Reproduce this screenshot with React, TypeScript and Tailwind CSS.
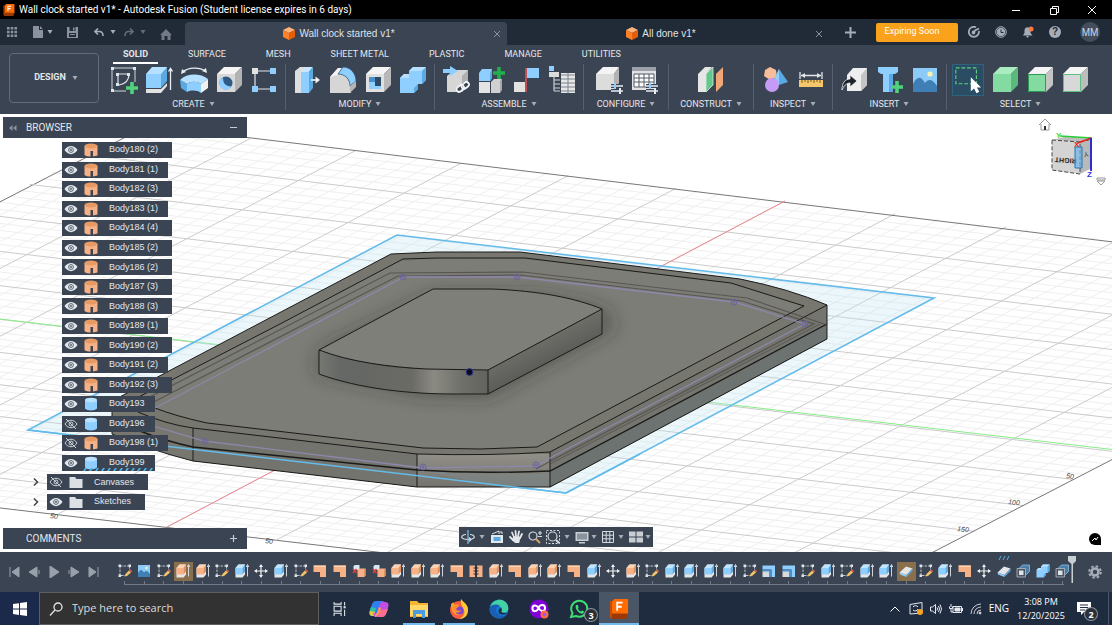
import React from "react";

type IconProps = { className?: string };
type IconType = React.FC<IconProps>;

const BLUE = "#8fcfff";
const BLUE_DARK = "#5aa9e2";
const ORANGE = "#f6b286";
const ORANGE_DARK = "#e0935f";

/* ---------- shared shapes ---------- */

const Box: React.FC<{ top: string; front: string; side: string }> = ({ top, front, side }) => (
    <g>
        <path d="M2 8 L9 1 H27 L20 8Z" fill={top} />
        <path d="M2 8 H20 V26 H2Z" fill={front} />
        <path d="M20 8 L27 1 V19 L20 26Z" fill={side} />
    </g>
);

const Plus: React.FC<{ x: number; y: number; color?: string }> = ({ x, y, color = "#52d17c" }) => (
    <path d={`M${x - 6} ${y} H${x + 6} M${x} ${y - 6} V${y + 6}`} stroke={color} strokeWidth="3.6" />
);

const Sliders = () => (
    <g stroke="#e8edf2" strokeWidth="1.5">
        <path d="M16 20 H28 M16 25 H28" stroke="#3b4453" strokeWidth="4" />
        <path d="M16 20 H28 M16 25 H28" />
        <path d="M20 17 V23" stroke={BLUE} strokeWidth="2" />
        <path d="M25 22 V28" strokeWidth="2" />
    </g>
);

const svg = (children: React.ReactNode): IconType =>
    ({ className = "size-7" }) => (
        <svg viewBox="0 0 28 28" className={`${className} shrink-0`} fill="none" aria-hidden="true">
            {children}
        </svg>
    );

/* ---------- ribbon icons ---------- */

const SketchIcon = svg(
    <>
        <path d="M2 2 H25 V16 M2 2 V25 H16" stroke="#cfd5dc" strokeWidth="1" />
        <g fill="#dfe4ea">
            <path d="M1 1h3v3H1zM23 1h3v3h-3zM1 23h3v3H1z" />
            <path d="M6 7h3v3H6zM17 7h3v3h-3zM6 17h3v3H6z" />
        </g>
        <path d="M8 8 V19 H9 C15 18 19 14 19 8Z" stroke="#dfe4ea" strokeWidth="1.2" />
        <Plus x={22} y={22} />
    </>
);

const ExtrudeIcon = svg(
    <>
        <path d="M2 9 L9 1 H22 L16 9Z" fill="#b5e0ff" />
        <path d="M1 8 H16 V22 H1Z" fill={BLUE} />
        <path d="M16 8 L22 1 V15 L16 22Z" fill={BLUE_DARK} />
        <path d="M1 8 L7 1 H22 L16 8Z" fill="#b5e0ff" />
        <path d="M1 23 H16 L22 17 V20 L16 27 H1Z" fill="#e2e2e2" />
        <path d="M25.500 24 V3 M23.500 5.500 L25.500 2.500 L27.500 5.500" stroke="#e8edf2" strokeWidth="1.3" />
    </>
);

const RevolveIcon = svg(
    <>
        <path d="M3 6 C8 1 20 1 25 5" stroke="#e8edf2" strokeWidth="1.3" />
        <path d="M1 8 L2 3 L6 6Z M27 7 L26 2 L22 5Z" fill="#e8edf2" />
        <path d="M0 14 C7 7 20 7 28 13 L21 18 C17 15 11 15 7 18Z" fill="#b5e0ff" />
        <path d="M0 14 L7 18 V26 L1 22Z" fill="#5aa9e2" />
        <path d="M7 18 C11 15 17 15 21 18 V27 C17 24 11 24 7 26Z" fill={BLUE} />
        <path d="M21 18 L28 13 V22 L21 27Z" fill="#f0f0f0" />
    </>
);

const HoleIcon = svg(
    <>
        <Box top="#f4f4f4" front="#d8d8d8" side="#b3b3b3" />
        <circle cx="11" cy="17" r="6.5" fill="#2f5a86" />
        <path d="M8 11.500 A6.500 6.500 0 1 0 16.500 20.500 C10 20 8 17 8 11.500Z" fill={BLUE} />
    </>
);

const PatternIcon = svg(
    <>
        <path d="M8 5 H20 M5 8 V20 M8 23 H20" stroke="#dfe4ea" strokeWidth="1.2" />
        <path d="M2 2h6v6H2z" fill="#e2e2e2" />
        <path d="M20 2h6v6h-6zM2 20h6v6H2zM20 20h6v6h-6z" fill={BLUE} />
    </>
);

const PressPullIcon = svg(
    <>
        <path d="M1 5 L6 1 H12 V23 L8 27 H1Z" fill="#dedede" />
        <path d="M7 6 L12 1 H19 L15 6Z" fill="#c6e7ff" />
        <path d="M7 6 H15 V27 H7Z" fill={BLUE} />
        <path d="M15 6 L19 1 V22 L15 27Z" fill={BLUE_DARK} />
        <path d="M17 14 H24" stroke="#f2f4f6" strokeWidth="1.6" />
        <path d="M21.500 10.500 L26 14 L21.500 17.500Z" fill="#f2f4f6" />
    </>
);

const FilletIcon = svg(
    <>
        <path d="M1 27 V11 L9 2 H14 L22 12 V27Z" fill="#d6d6d6" />
        <path d="M1 11 L9 2 H16 L8 9Z" fill="#f3f3f3" />
        <path d="M9 8 L14 1 C22 1 27 8 27 15 L21 20 C21 13 16 8 9 8Z" fill={BLUE} stroke="#33557a" strokeWidth="0.8" />
        <path d="M21 20 L27 15 V21 L21 27Z" fill="#b5b5b5" />
    </>
);

const ShellIcon = svg(
    <>
        <Box top="#f4f4f4" front="#e0e0e0" side="#b8b8b8" />
        <path d="M5 11 H17 V23 H5Z" fill="#2f4a66" />
        <path d="M5 23 V16 H11 V20 H17 V23Z" fill={BLUE} />
        <path d="M5 11 H11 V16 H5Z" fill="#4b90c8" />
    </>
);

const CombineIcon = svg(
    <>
        <path d="M1 12 L5 8 H10 V5 L14 1 H27 V14 L23 18 H19 V23 L15 27 H1Z" fill={BLUE} />
        <path d="M1 12 L5 8 H10 V5 L14 1 H27 L23 5 H10 V12Z" fill="#b5e0ff" />
        <path d="M23 5 L27 1 V14 L23 18Z M15 22 L19 18 V23 L15 27Z" fill={BLUE_DARK} />
    </>
);

const InsertCompIcon = svg(
    <>
        <path d="M4 10 L11 4 H25 V19 L19 26 H4Z" fill="#d6d6d6" />
        <path d="M19 10 L25 4 V19 L19 26Z" fill="#b0b0b0" />
        <path d="M0 5 H8" stroke={BLUE} strokeWidth="4" />
        <path d="M7 0 L15 5 L7 10Z" fill={BLUE} />
        <g stroke="#3b4453" strokeWidth="5"><path d="M14 25 L24 17" /></g>
        <g stroke="#f2f4f6" strokeWidth="1.8">
            <rect x="13" y="20" width="8" height="5" rx="2.500" transform="rotate(-38 17 22)" />
            <rect x="18" y="17" width="8" height="5" rx="2.500" transform="rotate(-38 22 19)" />
        </g>
    </>
);

const NewCompIcon = svg(
    <>
        <path d="M1 7 L4 3 H14 V12 L12 15 H1Z" fill={BLUE} />
        <path d="M12 7 L14 3 V12 L12 15Z" fill={BLUE_DARK} />
        <path d="M1 16 H12 V27 H1Z" fill="#e4e4e4" />
        <path d="M13 16 L16 13 H24 L22 16 V27 H13Z" fill="#d0d0d0" />
        <path d="M22 16 L24 13 V24 L22 27Z" fill="#a8a8a8" />
        <Plus x={21} y={7} color="#23b04c" />
    </>
);

const JointIcon = svg(
    <>
        <path d="M14 2 H26 V12 H14Z" fill={BLUE} />
        <path d="M1 16 H12 V26 H1Z" fill="#e2e2e2" />
        <path d="M13 2 V26" stroke="#e05252" strokeWidth="1.6" />
    </>
);

const BomIcon = svg(
    <>
        <path d="M1 0h5v5H1z" fill={BLUE} />
        <path d="M1 6h5v5H1zM6 6h5v5H6z" fill="#dcdcdc" />
        <path d="M6 11 V25 M6 14 H12 M6 18 H12 M6 22 H12 M6 25 H12" stroke="#c9cfd6" strokeWidth="1.2" />
        <path d="M13 7h14v20H13z" fill="#e6e6e6" />
        <path d="M13 9H27M13 13H27M13 17H27M13 21H27M13 25H27M20 7V27" stroke="#7b8490" strokeWidth="1" />
    </>
);

const ConfigBoxIcon = svg(
    <>
        <path d="M1 8 L8 1 H24 L19 8Z" fill="#f4f4f4" />
        <path d="M1 8 H19 V24 H1Z" fill="#dcdcdc" />
        <path d="M19 8 L24 1 V17 L19 24Z" fill="#b3b3b3" />
        <Sliders />
    </>
);

const ConfigTableIcon = svg(
    <>
        <path d="M2 1h24v23H2z" fill="#e2e2e2" />
        <path d="M2 1h24v4H2z" fill="#9aa1aa" />
        <path d="M4 8h20v13H4z" fill="#fff" stroke="#515a66" strokeWidth="1" />
        <path d="M4 12H24M4 16H24M9 8V21M14 8V21M19 8V21" stroke="#515a66" strokeWidth="1" />
        <Sliders />
    </>
);

const PlaneIcon = svg(
    <>
        <path d="M1 8 L8 1 H15 L9 8 V26 H1Z" fill="#e6e6e6" />
        <path d="M9 8 L16 1 V19 L9 26Z" fill="#62c98a" stroke="#e6e6e6" strokeWidth="0.8" />
        <path d="M19 8 L26 1 V19 L19 26Z" fill="#f0a778" />
    </>
);

const InspectIcon = svg(
    <>
        <path d="M8 1 L14 4 L15 11 L8 14 L2 10 L3 4Z" fill="#f6bd9a" />
        <path d="M17 3 L26 16 L17 19 L12 14Z" fill={BLUE_DARK} />
        <path d="M17 3 L17 19 L12 14Z" fill={BLUE} />
        <circle cx="10" cy="19" r="7" fill="#c59bf5" />
    </>
);

const MeasureIcon = svg(
    <>
        <path d="M3 6 V13 M25 6 V13 M4 9.500 H24" stroke="#e2e6ea" strokeWidth="1.3" />
        <path d="M4 9.500 L8 7 V12Z M24 9.500 L20 7 V12Z" fill="#e2e6ea" />
        <path d="M2 14h24v7H2z" fill="#f5c66b" />
        <path d="M5 14V17M8 14V16M11 14V17M14 14V16M17 14V17M20 14V16M23 14V17" stroke="#7a5b1d" strokeWidth="1" />
    </>
);

const DeriveIcon = svg(
    <>
        <path d="M6 9 L12 2 H26 V19 L20 25 H6Z" fill="#eeeeee" />
        <path d="M20 9 L26 2 V19 L20 25Z" fill="#c4c4c4" />
        <path d="M1 24 C1 17 4 13 9 13 V9 L16 15 L9 21 V17 C5 17 3 20 1 24Z" fill="#1f242c" stroke="#f2f2f2" strokeWidth="0.8" />
    </>
);

const FastenerIcon = svg(
    <>
        <path d="M2 1 H22 V6 L19 8 H5 L2 6Z" fill={BLUE} />
        <path d="M7 8 H17 V26 H7Z" fill={BLUE_DARK} />
        <path d="M7 8 H13 V26 H7Z" fill={BLUE} />
        <Plus x={21} y={21} />
    </>
);

const CanvasIcon = svg(
    <>
        <path d="M2 2h24v24H2z" fill="#8ccaf7" />
        <path d="M2 18 C6 10 10 10 14 17 C17 13 21 12 26 20 V26 H2Z" fill="#3f7fb6" />
        <circle cx="19" cy="8" r="2.6" fill="#fbf3b0" />
    </>
);

const GreenBoxIcon = svg(<Box top="#a9ecc0" front="#84dba1" side="#5cb87c" />);
const GreenFaceIcon = svg(
    <>
        <Box top="#f4f4f4" front="#84dba1" side="#c4c4c4" />
        <path d="M2.500 8.500 H19.500 V25.500 H2.500Z" stroke="#2c9a53" strokeWidth="1" />
    </>
);
const GreyFaceIcon = svg(
    <>
        <Box top="#f4f4f4" front="#d8d8d8" side="#bcbcbc" />
        <path d="M2.500 8.500 H19.500 V25.500 H2.500Z" stroke="#5fbf80" strokeWidth="1" />
    </>
);

const SelectIcon: IconType = () => (
    <span className="flex h-8 w-8 shrink-0 items-center justify-center border border-[#2f627d] bg-[#2b4d64]">
        <svg viewBox="0 0 32 32" className="size-8" fill="none" aria-hidden="true">
            <path d="M3 3 H25 V20 H3Z" stroke="#5ed07f" strokeWidth="1.2" strokeDasharray="4 2" />
            <path d="M19 13 V28 L22.500 25 L25 30 L28 28.500 L25.500 24 H30Z" fill="#fff" />
        </svg>
    </span>
);

/* ---------- timeline icons ---------- */

const TlSketch = svg(
    <>
        <path d="M4 4 H23 M4 4 V23 H14 M23 4 V12" stroke="#dfe4ea" strokeWidth="1.6" strokeDasharray="5 2" />
        <path d="M1 1h5v5H1zM21 1h5v5h-5zM1 21h5v5H1z" fill="#dfe4ea" />
        <path d="M13 25 L15 20 L22 13 L26 17 L18 24Z" fill="#f2c36a" />
        <path d="M22 13 L26 17 L28 14 L25 11Z" fill="#e8604c" />
    </>
);

const tlExtrude = (top: string, face: string, side: string) =>
    svg(
        <>
            <path d="M1 8 L7 1 H20 V21 L15 27 H1Z" fill="#e6e6e6" />
            <path d="M1 8 L7 1 H20 L15 8Z" fill={top} />
            <path d="M1 8 H15 V21 H1Z" fill={face} />
            <path d="M15 8 L20 1 V15 L15 21Z" fill={side} />
            <path d="M25 25 V3 M22.500 6 L25 1 L27.500 6" stroke="#dfe4ea" strokeWidth="1.8" />
        </>
    );
const TlExtrudeO = tlExtrude("#ffd2b0", ORANGE, ORANGE_DARK);
const TlExtrudeB = tlExtrude("#bfe5ff", BLUE, BLUE_DARK);

const TlMove = svg(
    <>
        <path d="M14 4 V24 M4 14 H24" stroke="#f2f4f6" strokeWidth="2.4" />
        <path d="M14 0 L18 6 H10Z M14 28 L18 22 H10Z M0 14 L6 10 V18Z M28 14 L22 10 V18Z" fill="#f2f4f6" />
    </>
);

const TlNotch = svg(
    <>
        <path d="M1 3 H26 V26 H14 V16 H1Z" fill={ORANGE} />
        <path d="M1 3 H26 L24 6 H3Z" fill="#ffd2b0" />
    </>
);

const TlFillet = svg(
    <>
        <path d="M1 3 H26 V26 H19 V11 H1Z" fill={BLUE} />
        <path d="M1 14 H15 V26 H1Z" fill="#d6dade" />
        <path d="M1 11 H19 V26 H15 V15 H1Z" fill="#4b90c8" />
    </>
);

const TlJoin = svg(
    <>
        <path d="M3 4 L6 2 H15 V12 H3Z" fill="#d6e8f6" />
        <path d="M11 12 L14 9 H27 V23 L24 26 H11Z" fill={ORANGE} />
        <path d="M24 12 L27 9 V23 L24 26Z" fill={ORANGE_DARK} />
        <path d="M2 10 L9 18 M9 10 L2 18" stroke="#dc3d3d" strokeWidth="3" />
    </>
);

const TlSplit = svg(
    <>
        <path d="M1 3 H12 V26 H1Z M16 3 H27 V26 H16Z" fill={ORANGE} />
        <path d="M14 1 V28" stroke="#222a36" strokeWidth="2" />
        <path d="M9 8 H19 M9 14 H19 M9 20 H19" stroke="#222a36" strokeWidth="2" />
    </>
);

const TlEraser = svg(
    <>
        <path d="M1 17 L14 5 L27 9 L15 22Z" fill="#e6e6e6" />
        <path d="M1 17 L15 22 V26 L2 21Z" fill={BLUE} />
        <path d="M15 22 L27 9 V14 L15 26Z" fill={BLUE_DARK} />
    </>
);

const TlShell = svg(
    <>
        <path d="M7 8 L13 2 H27 V15 L21 21 H7Z" fill="#4d7ea8" stroke={BLUE} strokeWidth="1.4" />
        <path d="M2 9 H19 V26 H2Z" fill="#4a5462" stroke="#c4cad1" strokeWidth="1.4" />
        <path d="M6 13 H15 V22 H6Z" fill="#dfe3e7" />
    </>
);

/* ---------- browser tree icons ---------- */

const Eye: React.FC<{ off?: boolean }> = ({ off }) => (
    <svg viewBox="0 0 14 12" className="h-3 w-3.5 shrink-0" fill="none" aria-hidden="true">
        {off ? (
            <g stroke="#cdd3da" strokeWidth="1">
                <path d="M1 6 C4 1 10 1 13 6 C10 11 4 11 1 6Z" />
                <circle cx="7" cy="6" r="2" />
                <path d="M2 1 L12 11" />
            </g>
        ) : (
            <g>
                <path d="M0.500 6 C4 0.500 10 0.500 13.500 6 C10 11.500 4 11.500 0.500 6Z" fill="#e3e8ed" />
                <circle cx="7" cy="6" r="2.400" fill="#e3e8ed" stroke="#4a5462" strokeWidth="0.900" />
                <circle cx="7" cy="6" r="0.900" fill="#4a5462" />
            </g>
        )}
    </svg>
);

const BodyIcon: React.FC<{ kind: string }> = ({ kind }) => (
    <svg viewBox="0 0 14 14" className="size-3.5 shrink-0" aria-hidden="true">
        {kind === "surface" && (
            <g>
                <path d="M0.500 3 V12 C2 13.500 4 13.500 6.500 13.500 V8 H9 V13.500 L13.500 12.500 V3Z" fill={ORANGE} />
                <ellipse cx="7" cy="3" rx="6.500" ry="2.500" fill="#e79a63" />
            </g>
        )}
        {kind === "solid" && (
            <g>
                <path d="M1 3 V11.500 C3 14 11 14 13 11.500 V3Z" fill={BLUE} />
                <ellipse cx="7" cy="3" rx="6" ry="2.300" fill="#b9e2ff" />
            </g>
        )}
        {kind === "folder" && <path d="M0.500 2 H6 L7.500 4 H13.500 V13 H0.500Z" fill="#dcdfe3" />}
    </svg>
);

const Caret: React.FC<IconProps> = ({ className = "text-[#a5adb8]" }) => (
    <svg viewBox="0 0 6 4" className={`h-1 w-1.5 shrink-0 ${className}`} fill="currentColor" aria-hidden="true">
        <path d="M0.500 0 H5.500 L3 4Z" />
    </svg>
);

const FusionLogo: React.FC<IconProps> = ({ className = "size-3" }) => (
    <svg viewBox="0 0 20 22" className={`${className} shrink-0`} aria-hidden="true">
        <path d="M2 3 L5 0 H20 V17 L17 19 H2Z" fill="#ff6b00" />
        <path d="M2 16 H20 L18 22 H2Z" fill="#9c3a07" />
        <path d="M2 3 V22 L0 20 V2Z" fill="#c94f04" />
        <path d="M8 13 V4 H14 M8 8.500 H13" stroke="#fff" strokeWidth="2" fill="none" />
    </svg>
);

const OrangeCube = () => (
    <svg viewBox="0 0 12 13" className="h-[13px] w-3 shrink-0" aria-hidden="true">
        <path d="M6 0 L12 3 L6 6 L0 3Z" fill="#ffb27a" />
        <path d="M0 3 L6 6 V13 L0 10Z" fill="#ff8126" />
        <path d="M12 3 L6 6 V13 L12 10Z" fill="#e55f0a" />
    </svg>
);

/* ---------- data ---------- */

const ribbonTabs = ["SOLID", "SURFACE", "MESH", "SHEET METAL", "PLASTIC", "MANAGE", "UTILITIES"];

const ribbonGroups: { label: string; width: string; icons: IconType[] }[] = [
    { label: "CREATE", width: "w-[183px]", icons: [SketchIcon, ExtrudeIcon, RevolveIcon, HoleIcon, PatternIcon] },
    { label: "MODIFY", width: "w-[149px]", icons: [PressPullIcon, FilletIcon, ShellIcon, CombineIcon] },
    { label: "ASSEMBLE", width: "w-[149px]", icons: [InsertCompIcon, NewCompIcon, JointIcon, BomIcon] },
    { label: "CONFIGURE", width: "w-[85px]", icons: [ConfigBoxIcon, ConfigTableIcon] },
    { label: "CONSTRUCT", width: "w-[85px]", icons: [PlaneIcon] },
    { label: "INSPECT", width: "w-[79px]", icons: [InspectIcon, MeasureIcon] },
    { label: "INSERT", width: "w-[114px]", icons: [DeriveIcon, FastenerIcon, CanvasIcon] },
    { label: "SELECT", width: "w-[148px]", icons: [SelectIcon, GreenBoxIcon, GreenFaceIcon, GreyFaceIcon] },
];

const bodies = [
    { label: "Body180 (2)", kind: "surface" },
    { label: "Body181 (1)", kind: "surface", tight: true },
    { label: "Body182 (3)", kind: "surface" },
    { label: "Body183 (1)", kind: "surface", tight: true },
    { label: "Body184 (4)", kind: "surface" },
    { label: "Body185 (2)", kind: "surface" },
    { label: "Body186 (2)", kind: "surface" },
    { label: "Body187 (3)", kind: "surface" },
    { label: "Body188 (3)", kind: "surface" },
    { label: "Body189 (1)", kind: "surface", tight: true },
    { label: "Body190 (2)", kind: "surface" },
    { label: "Body191 (2)", kind: "surface", tight: true },
    { label: "Body192 (3)", kind: "surface" },
    { label: "Body193", kind: "solid", tight: true },
    { label: "Body196", kind: "solid", tight: true, hidden: true },
    { label: "Body198 (1)", kind: "surface", tight: true, hidden: true },
    { label: "Body199", kind: "solid", tight: true, pending: true },
    { label: "Canvases", kind: "folder", hidden: true },
    { label: "Sketches", kind: "folder" },
];

const timelineIcons: Record<string, IconType> = {
    s: TlSketch,
    i: CanvasIcon,
    o: TlExtrudeO,
    b: TlExtrudeB,
    m: TlMove,
    n: TlNotch,
    f: TlFillet,
    j: TlJoin,
    p: TlSplit,
    e: TlEraser,
    h: TlShell,
    c: CombineIcon,
};
const timeline = "sisoosbmbsnnjjooonponoonbmosbbbbsffsbsbbesbnmehch".split("");
const timelineActive = [3, 40];

/* ---------- canvas drawing ---------- */

const GRID_STEPS = 30;
const gridLines = Array.from({ length: GRID_STEPS * 2 + 1 }, (_, n) => {
    const k = n - GRID_STEPS;
    const j = k / 5;
    const major = k % 5 === 0;
    const edge = Math.abs(k) === GRID_STEPS;
    const drift = 51.5 * j + 0.47 * j * j;
    const leftX = -184 + drift;
    const rightX = 1125 + drift;
    const topX = 785 + 109.5 * j + 0.5 * j * j;
    const bottomX = 167 + 109 * j + 0.2 * j * j;
    return {
        k,
        color: edge ? "#777" : major ? "#cbcbcb" : "#efefef",
        along: [leftX, 200 - 0.53 * leftX, rightX, 551 - 0.522 * (rightX - 937)],
        across: [topX, 201 + 0.1165 * (topX - 785), bottomX, 527 + 0.12 * (bottomX - 167)],
    };
}).sort((a, b) => Number(a.k % 5 === 0) - Number(b.k % 5 === 0));

const Scene = () => (
    <svg
        viewBox="0 114 1112 438"
        preserveAspectRatio="xMidYMid slice"
        className="absolute inset-0 h-full w-full"
        fill="none"
        aria-hidden="true"
    >
        <defs>
            <linearGradient id="bossFront" x1="319" y1="0" x2="488" y2="0" gradientUnits="userSpaceOnUse">
                <stop offset="0" stopColor="#777872" />
                <stop offset="0.12" stopColor="#656866" />
                <stop offset="0.3" stopColor="#666763" />
                <stop offset="0.55" stopColor="#6b6b66" />
                <stop offset="0.68" stopColor="#8b8982" />
                <stop offset="0.85" stopColor="#6f6f6a" />
                <stop offset="1" stopColor="#62625e" />
            </linearGradient>
            <linearGradient id="bossSide" x1="520" y1="345" x2="534" y2="373" gradientUnits="userSpaceOnUse">
                <stop offset="0" stopColor="#71716c" />
                <stop offset="1" stopColor="#5a5a56" />
            </linearGradient>
            <linearGradient id="frontFace" x1="0" y1="454" x2="0" y2="487" gradientUnits="userSpaceOnUse">
                <stop offset="0" stopColor="#918f88" />
                <stop offset="1" stopColor="#74736d" />
            </linearGradient>
            <filter id="soft" x="-30%" y="-30%" width="160%" height="160%">
                <feGaussianBlur stdDeviation="10" />
            </filter>
        </defs>

        {gridLines.map(({ k, color, along, across }) => (
            <g key={k} stroke={color} strokeWidth="1">
                <path d={`M${along[0]} ${along[1]} L${along[2]} ${along[3]}`} />
                <path d={`M${across[0]} ${across[1]} L${across[2]} ${across[3]}`} />
            </g>
        ))}
        <path d="M785 201 L167 527" stroke="#f08a94" />
        <path d="M0 319 L1125 451" stroke="#86ee86" />

        <g fill="#444" fontFamily="Liberation Sans" fontStyle="italic" fontSize="7">
            <text x="1066" y="478" transform="rotate(6 1066 478)">50</text>
            <text x="1008" y="504" transform="rotate(6 1008 504)">100</text>
            <text x="957" y="531" transform="rotate(6 957 531)">150</text>
            <text x="50" y="518" transform="rotate(6 50 518)">50</text>
            <text x="265" y="543" transform="rotate(6 265 543)">50</text>
        </g>

        {/* sketch plane */}
        <path d="M397 235 L934 298 L566 493 L28 430Z" fill="#bfe3f5" fillOpacity="0.3" stroke="#64bbea" strokeWidth="1.6" />

        {/* base plate */}
        <path
            d="M391 254 L437 252 H520 L740 279 Q790 289 827 305 V339 L550 487 H417 L193 461 Q150 450 112 434 V401Z"
            fill="#777770"
        />
        <path d="M398 261 L437 259 H523 L731 283 L804 306 L537 447 L480 449 L423 448 L207 423 L155 408 L125 404Z" fill="#7d7d77" />
        <path d="M550 452 L827 305 V339 L550 487Z" fill="#75756f" />
        <path d="M550 472 L827 325 V339 L550 487Z" fill="#6c7371" />
        <path d="M193 428 L417 454 V487 L193 461Z" fill="#74746e" />
        <path d="M417 454 H550 V487 H417Z" fill="url(#frontFace)" />
        <path d="M417 470 L483 474 H550 V487 L500 487Z" fill="#7e888a" fillOpacity="0.6" />

        {/* contact shadow */}
        <path
            d="M322 350 L433 296 L540 296 L602 309 L616 326 L488 396 L420 394 L314 372Z"
            fill="#2e2e2b"
            fillOpacity="0.5"
            filter="url(#soft)"
        />

        {/* plate edges */}
        <g stroke="#1a1a18" strokeWidth="1">
            <path d="M112 401 L391 254 L437 252 H520 L740 279 Q790 289 827 305 V339 L550 487 H417 L193 461 Q150 450 112 434Z" />
            <path d="M125 404 L280 324 L403 259 L437 258 L525 258 L731 283 L804 306 L537 447 L480 449 L423 448 L207 423 Q175 416 155 408 L138 400" />
            <path d="M138 412 Q165 424 193 428 L417 454 Q490 456 550 452 L827 305" />
            <path d="M193 428 V461 M417 454 V487 M550 452 V487" />
            <path d="M140 431 Q165 441 193 447 L417 470 Q480 474 550 471 L827 324" strokeWidth="1.400" />
        </g>
        <g stroke="#4a4641" strokeOpacity="0.7" strokeWidth="1.200">
            <path d="M140 402 L390 273 L523 272 L747 298 L827 325" />
            <path d="M146 406 L398 276 L520 275 L742 301 L814 324 L560 456 L536 469" />
            <path d="M550 464 L820 324" strokeOpacity="0.5" />
        </g>
        <path
            d="M155 408 L404 277 L517 277 L734 302 L805 324 L550 458 L536 466 L423 468 L204 441 L150 425"
            stroke="#8d87ab"
            strokeWidth="1.3"
        />
        <g stroke="#6c63a0" strokeWidth="1">
            {[[403, 277], [517, 277], [734, 302], [805, 324], [536, 465], [423, 467], [205, 441]].map(([x, y]) => (
                <g key={x}>
                    <circle cx={x} cy={y} r="3" />
                    <circle cx={x} cy={y} r="1" />
                </g>
            ))}
        </g>
        <path d="M28 430 L566 493 L640 454" stroke="#64bbea" strokeWidth="1.6" />

        {/* raised boss */}
        <path d="M319 350 C350 362 390 369 426 369 H488 V394 H455 C410 394 360 389 319 374Z" fill="url(#bossFront)" />
        <path d="M488 370 L602 309 V334 L488 394Z" fill="url(#bossSide)" />
        <path d="M433 289 H492 C540 291 575 298 602 309 L488 370 L426 369 C390 367 350 362 319 350Z" fill="#7e7f79" />
        <g stroke="#1a1a18" strokeWidth="1">
            <path d="M433 289 H492 C540 291 575 298 602 309 L488 370 L426 369 C390 367 350 362 319 350Z" />
            <path d="M319 350 V374 C360 389 410 394 455 394 H488 L602 334 V309 M488 370 V394" />
        </g>
        <circle cx="469.500" cy="372" r="3.500" fill="#0b0b1e" stroke="#3f3f8a" />
    </svg>
);

const ViewCube = () => (
    <svg viewBox="0 0 80 72" className="absolute top-1 right-0 h-[72px] w-20" fill="none" aria-hidden="true">
        <path d="M7 7 L13 1 L19 7 M9 6 V12 H17 V6" stroke="#999" />
        <path d="M12 8h2v4h-2z" fill="#333" />
        <path d="M20 22 L32 19 H60 L48 24Z" fill="#bdbdbd" />
        <path d="M20 22 L48 24 V56 L20 52Z" fill="#d4d4d4" />
        <path d="M48 24 L60 21 V50 L48 56Z" fill="#b9b9b9" />
        <path d="M20 22 L48 24 V56 L20 52Z M48 24 L60 21" stroke="#444" strokeDasharray="4 2" />
        <text x="34" y="36" fontSize="7" fontWeight="700" fontFamily="Liberation Sans" fill="#222" textAnchor="middle" transform="rotate(184 34 38)">
            RIGHT
        </text>
        <text x="54" y="38" fontSize="7" fontFamily="Liberation Sans" fill="#444" textAnchor="middle" transform="rotate(170 54 36)">
            Y
        </text>
        <path d="M43 29 H50 V50 H43Z" fill="#6fb5e8" fillOpacity="0.7" stroke="#1f77b8" />
        <path d="M28 18 L60 20" stroke="#27d034" strokeWidth="1.6" />
        <path d="M59 20 L46 25" stroke="#e52525" strokeWidth="1.8" />
        <path d="M59 20 V53" stroke="#2020c8" strokeWidth="1.8" />
        <g fontFamily="Liberation Sans" fontSize="8" fontWeight="700">
            <text x="24" y="20" fill="#3ddc3d">Y</text>
            <text x="42" y="29" fill="#e52525">X</text>
            <text x="55" y="59" fill="#3434e0">Z</text>
        </g>
        <path d="M65 60 H73 V62 H65Z M65 63 L69 67 L73 63Z" stroke="#999" />
    </svg>
);

/* ---------- page sections ---------- */

const TitleBar = () => (
    <header className="flex h-[19px] shrink-0 items-center bg-black px-[3px] text-white">
        <FusionLogo />
        <h1 className="ml-1 flex-1 font-['Roboto','Noto_Sans',sans-serif] text-[10px] leading-4">
            Wall clock started v1* - Autodesk Fusion (Student license expires in 6 days)
        </h1>
        <div className="mr-3 flex items-center gap-7">
            <button aria-label="Minimize">
                <svg viewBox="0 0 10 10" className="size-2.5" stroke="#fff"><path d="M1 5.500 H9" /></svg>
            </button>
            <button aria-label="Restore">
                <svg viewBox="0 0 10 10" className="size-2.5" stroke="#fff" fill="none">
                    <path d="M1.500 3.500 H7.500 V9.500 H1.500Z M3.500 3 V1.500 H9.500 V7.500 H8" />
                </svg>
            </button>
            <button aria-label="Close">
                <svg viewBox="0 0 10 10" className="size-2.5" stroke="#fff"><path d="M1 1 L9 9 M9 1 L1 9" /></svg>
            </button>
        </div>
    </header>
);

const DocumentBar = () => (
    <div className="flex h-[26px] shrink-0 items-stretch bg-[#212a37] text-[11px] text-[#dfe3e8]">
        <div className="flex w-[185px] shrink-0 items-center pl-[7px] text-[#8b929d]">
            <button aria-label="Data panel" className="mr-4">
                <svg viewBox="0 0 10 10" className="size-2.5" fill="currentColor">
                    <path d="M0 0h2.600v2.600H0zM3.700 0h2.600v2.600H3.700zM7.400 0H10v2.600H7.400zM0 3.700h2.600v2.600H0zM3.700 3.700h2.600v2.600H3.700zM7.400 3.700H10v2.600H7.400zM0 7.400h2.600V10H0zM3.700 7.400h2.600V10H3.700zM7.400 7.400H10V10H7.400z" />
                </svg>
            </button>
            <button aria-label="File" className="mr-3.5 flex items-center gap-1">
                <svg viewBox="0 0 10 12" className="h-3 w-2.5" fill="currentColor"><path d="M0 0 H6 V4 H10 V12 H0Z M7 0 L10 3 H7Z" /></svg>
                <Caret />
            </button>
            <button aria-label="Save" className="mr-4">
                <svg viewBox="0 0 11 11" className="size-[11px]" fill="currentColor" fillRule="evenodd">
                    <path d="M0 0 H11 V11 H0Z M2.500 0 V4 H8.500 V0Z M2 6 V10 H9 V6Z" /><path d="M6 0.500h1.500v3H6zM3 7h5v1H3z" />
                </svg>
            </button>
            <button aria-label="Undo" className="mr-2 flex items-center gap-1.5">
                <svg viewBox="0 0 10 8" className="h-2 w-2.5" fill="none" stroke="#a5adb8" strokeWidth="1.600"><path d="M1 3.500 H6 Q9 4 9 8 M4 0.500 L1 3.500 L4 6.500" /></svg>
                <Caret />
            </button>
            <button aria-label="Redo" className="mr-3.5 flex items-center gap-1.5 opacity-50">
                <svg viewBox="0 0 10 8" className="h-2 w-2.5" fill="none" stroke="#a5adb8" strokeWidth="1.600"><path d="M9 3.500 H4 Q1 4 1 8 M6 0.500 L9 3.500 L6 6.500" /></svg>
                <Caret />
            </button>
            <button aria-label="Home" className="mt-1">
                <svg viewBox="0 0 12 11" className="h-[11px] w-3" fill="#737a85"><path d="M6 0 L12 6 H10.500 V11 H7.500 V7 H4.500 V11 H1.500 V6 H0Z" /></svg>
            </button>
        </div>

        <div className="mt-[3px] flex flex-1 items-center rounded-t-sm bg-[#3b4453]">
            <div className="flex flex-1 items-center justify-center gap-1">
                <OrangeCube />
                <span className="font-['Liberation_Sans',Arial,sans-serif] text-[10px]">Wall clock started v1*</span>
            </div>
            <button aria-label="Close Wall clock started" className="mr-1.5">
                <svg viewBox="0 0 8 8" className="size-2" stroke="#8b929d"><path d="M1 1 L7 7 M7 1 L1 7" /></svg>
            </button>
        </div>
        <div className="mt-[3px] flex flex-1 items-center">
            <div className="flex flex-1 items-center justify-center gap-1">
                <OrangeCube />
                <span className="font-['Liberation_Sans',Arial,sans-serif] text-[10px]">All done v1*</span>
            </div>
            <button aria-label="Close All done" className="mr-1.5">
                <svg viewBox="0 0 8 8" className="size-2" stroke="#8b929d"><path d="M1 1 L7 7 M7 1 L1 7" /></svg>
            </button>
        </div>

        <div className="flex w-[283px] shrink-0 items-center pl-4 text-[#a5adb8]">
            <button aria-label="New design" className="mr-5">
                <svg viewBox="0 0 11 11" className="size-[11px]" stroke="currentColor" strokeWidth="2"><path d="M5.500 0 V11 M0 5.500 H11" /></svg>
            </button>
            <button className="mr-2.5 flex h-[19px] w-[82px] items-center justify-center rounded-xs bg-[#faa21b] pr-2.5 font-['Roboto',sans-serif] text-[9px] text-white">
                Expiring Soon
            </button>
            <div className="flex items-center gap-[15px]">
                <button aria-label="Extensions">
                    <svg viewBox="0 0 12 12" className="size-3" fill="none" stroke="currentColor" strokeWidth="1.800">
                        <path d="M8 1.300 A5 5 0 1 0 10.800 5" /><path d="M5.500 7 L7 4.500 L11 2.500" />
                        <circle cx="5.500" cy="6.500" r="1" />
                    </svg>
                </button>
                <button aria-label="Job status">
                    <svg viewBox="0 0 12 12" className="size-3" fill="none" stroke="currentColor">
                        <circle cx="6" cy="6" r="5.300" /><circle cx="6" cy="6" r="3.800" fill="currentColor" /><path d="M6 3.500 V6.500 H8.500" stroke="#212a37" />
                    </svg>
                </button>
                <button aria-label="Notifications">
                    <svg viewBox="0 0 12 12" className="size-3" fill="currentColor">
                        <path d="M1 9.500 L2.500 7 V4.500 C2.500 0 8.500 0 8.500 4.500 V7 L10.500 9.500Z M4 10 H7 L5.500 12Z" /><circle cx="9" cy="3" r="2.500" fill="#ff7b42" />
                    </svg>
                </button>
                <button aria-label="Help" className="flex size-3 items-center justify-center rounded-full bg-[#a5adb8] font-['Liberation_Sans',sans-serif] text-[10px] leading-none font-bold text-[#212a37]">
                    ?
                </button>
            </div>
            <button aria-label="Account" className="ml-[19px] flex size-5 items-center justify-center rounded-full bg-[#434d5c] font-['Liberation_Sans',sans-serif] text-[10px] text-[#d6dbe1]">
                MM
            </button>
        </div>
    </div>
);

const Ribbon = () => (
    <div className="flex h-[69px] shrink-0 overflow-hidden bg-[#3b4453] font-['Roboto',sans-serif] text-[9px] text-[#e4e8ec]">
        <button className="mt-2 ml-[9px] flex h-[50px] w-[90px] shrink-0 items-center justify-center gap-1.5 rounded-sm border border-[#626c7b] pl-1 font-bold">
            DESIGN <Caret />
        </button>
        <div className="ml-[11px] flex-1">
            <nav className="flex h-[19px] items-stretch gap-5 pl-[3px]">
                {ribbonTabs.map((tab, index) => (
                    <button
                        key={tab}
                        className={`flex items-center border-b-2 px-2.5 pt-0.5 leading-none whitespace-nowrap ${
                            index === 0 ? "border-white font-bold" : "border-transparent"
                        }`}
                    >
                        {tab}
                    </button>
                ))}
            </nav>
            <div className="flex h-[46px]">
                {ribbonGroups.map((group, index) => (
                    <div
                        key={group.label}
                        className={`flex shrink-0 flex-col items-center ${group.width} ${
                            index === 0 ? "-ml-2" : "border-l border-[#566070]"
                        }`}
                    >
                        <div className="flex h-8 shrink-0 items-center justify-center gap-[7px]">
                            {group.icons.map((Icon, i) => (
                                <Icon key={i} />
                            ))}
                        </div>
                        <button className="flex items-center gap-1 leading-4 whitespace-nowrap">
                            {group.label} <Caret />
                        </button>
                    </div>
                ))}
            </div>
        </div>
    </div>
);

const BrowserPanel = () => (
    <section className="absolute inset-y-0 left-[3px] flex w-[244px] flex-col pt-[3px] pb-[3px] text-[#e4e8ec]">
        <div className="flex h-[21px] shrink-0 items-center bg-[#3b4453] px-1.5 font-['Roboto','Noto_Sans',sans-serif] text-[10px]">
            <svg viewBox="0 0 8 6" className="mr-[9px] h-1.5 w-2" fill="#8b929d"><path d="M3.500 0 V6 L0 3Z M7.500 0 V6 L4 3Z" /></svg>
            <h2 className="flex-1">BROWSER</h2>
            <button aria-label="Collapse browser" className="mr-1 h-px w-[7px] bg-[#c7cdd4]"></button>
        </div>
        <ul className="flex flex-1 flex-col items-start justify-between pt-1 pb-[18px] font-['Liberation_Sans',Arial,sans-serif] text-[9px]">
            {bodies.map((item) => {
                const folder = item.kind === "folder";
                return (
                    <li key={item.label} className={`flex items-center ${folder ? "pl-[30px]" : "pl-[59px]"}`}>
                        {folder && (
                            <svg viewBox="0 0 6 8" className="mr-2 h-2 w-1.5" fill="none" stroke="#444" strokeWidth="1.500">
                                <path d="M1 0.500 L4.500 4 L1 7.500" />
                            </svg>
                        )}
                        <div
                            className={`relative flex h-4 items-center bg-[#3b4453] pl-0.5 whitespace-nowrap ${
                                item.tight ? "pr-2.5" : "pr-3.5"
                            }`}
                        >
                            <Eye off={item.hidden} />
                            <span className="ml-1.5 flex"><BodyIcon kind={item.kind} /></span>
                            <span className="ml-[11px]">{item.label}</span>
                            {item.pending && (
                                <svg viewBox="0 0 72 4" className="absolute right-0 bottom-0 h-1 w-[72px]" fill="#4db4e8" aria-hidden="true">
                                    {Array.from({ length: 12 }, (_, i) => (
                                        <path key={i} d={`M${i * 6} 4 L${i * 6 + 2} 1 H${i * 6 + 4} L${i * 6 + 2} 4Z`} />
                                    ))}
                                </svg>
                            )}
                        </div>
                    </li>
                );
            })}
        </ul>
        <div className="flex h-[21px] shrink-0 items-center bg-[#3b4453] pr-2.5 pl-[23px] font-['Roboto','Noto_Sans',sans-serif] text-[10px]">
            <h2 className="flex-1">COMMENTS</h2>
            <button aria-label="Add comment">
                <svg viewBox="0 0 7 7" className="size-[7px]" stroke="#c7cdd4" strokeWidth="1.200"><path d="M3.500 0 V7 M0 3.500 H7" /></svg>
            </button>
        </div>
    </section>
);

const NavBar = () => (
    <div className="absolute bottom-[5px] left-1/2 flex h-5 w-[194px] -translate-x-1/2 items-center justify-between bg-[#3b4453] px-0.5 text-[#d6dbe1]">
        <button aria-label="Orbit" className="flex items-center gap-1">
            <svg viewBox="0 0 14 14" className="size-3.5" fill="none" stroke="currentColor" strokeWidth="1.200">
                <path d="M5 4.500 C-1 5 -1 9.500 7 9.500 C15 9.500 15 5 9 4.500" /><path d="M7 0 V14" stroke="#7cc4f5" /><path d="M8 7.500 L10 9.500 L8 11.500" />
            </svg>
            <Caret />
        </button>
        <button aria-label="Look at">
            <svg viewBox="0 0 14 14" className="size-3.5"><path d="M1 5 H13 V13 H1Z" fill="#e3e7eb" /><path d="M3.500 7h7v4h-7z" fill="#5aa9e2" /><path d="M2 4 L9 1 V4 M10 2 H12 V4" stroke="#e3e7eb" fill="none" /></svg>
        </button>
        <button aria-label="Pan">
            <svg viewBox="0 0 14 14" className="size-3.5" fill="none" stroke="#e3e7eb" strokeLinecap="round" strokeWidth="1.800">
                <path d="M5 7 L3 2.500 M7 6 L6.500 1 M9 6.500 L10 1.500 M11 8 L13 4 M4 10 L1 7" /><path d="M5 7 L10.500 7.500 L9.500 12 H6.500 L4 10Z" fill="#e3e7eb" />
            </svg>
        </button>
        <button aria-label="Zoom">
            <svg viewBox="0 0 14 14" className="size-3.5" fill="none" stroke="currentColor" strokeWidth="1.200">
                <circle cx="5" cy="6" r="4" /><path d="M8 9 L12 13" stroke="#d9a35e" strokeWidth="2" /><path d="M10 3 H14 M12 1 V5 M10 6.500 H14" />
            </svg>
        </button>
        <button aria-label="Fit" className="flex items-center gap-1">
            <svg viewBox="0 0 14 14" className="size-3.5" fill="none" stroke="currentColor">
                <path d="M0.500 0.500 H13.500 V13.500 H0.500Z" strokeDasharray="2 1.500" /><circle cx="6.500" cy="6.500" r="4.500" strokeWidth="1.200" /><path d="M10 10 L13 13" strokeWidth="2" />
            </svg>
            <Caret />
        </button>
        <button aria-label="Display settings" className="flex items-center gap-0.5">
            <svg viewBox="0 0 14 14" className="size-3.5"><path d="M0.500 2 H13.500 V11 H0.500Z" fill="#c9ced4" /><path d="M2 3.500h10v6H2z" fill="#8b929d" /><path d="M4 12 H10 V13.500 H4Z" fill="#c9ced4" /></svg>
            <Caret />
        </button>
        <button aria-label="Grid settings" className="flex items-center gap-1">
            <svg viewBox="0 0 12 12" className="size-3" fill="none" stroke="currentColor"><path d="M0.500 0.500 H11.500 V11.500 H0.500Z M4.200 0.500 V11.500 M7.800 0.500 V11.500 M0.500 4.200 H11.500 M0.500 7.800 H11.500" /></svg>
            <Caret />
        </button>
        <button aria-label="Viewports" className="flex items-center gap-0.5">
            <svg viewBox="0 0 14 12" className="h-3 w-3.5" fill="#c9ced4"><path d="M0 0.500h6.500v5H0zM7.500 0.500H14v5H7.500zM0 6.500h6.500v5H0zM7.500 6.500H14v5H7.500z" /></svg>
            <Caret />
        </button>
    </div>
);

const Timeline = () => (
    <div className="flex h-10 shrink-0 items-center bg-[#3b4453]">
        <div className="flex w-[115px] shrink-0 items-center gap-2 pl-2 text-[#98a0ab]">
            {[
                ["Start", "M2 1 V11 M11 1 L4 6 L11 11Z"],
                ["Step back", "M9 1 L1 6 L9 11Z M11 4 V8"],
                ["Play", "M2 0 L11 6 L2 12Z"],
                ["Step forward", "M3 1 L11 6 L3 11Z M1 4 V8"],
                ["End", "M10 1 V11 M1 1 L8 6 L1 11Z"],
            ].map(([label, d]) => (
                <button key={label} aria-label={label}>
                    <svg viewBox="0 0 12 12" className="size-3" fill="currentColor"><path d={d} stroke="currentColor" strokeWidth="1" /></svg>
                </button>
            ))}
        </div>
        <ol className="relative flex flex-1">
            <li aria-hidden="true" className="absolute right-2 bottom-0 left-2.5 h-px bg-[#707987]"></li>
            {timeline.map((key, index) => {
                const Icon = timelineIcons[key];
                return (
                    <li key={index} className="relative flex flex-1 flex-col items-center pt-0.5">
                        <span
                            className={`flex h-[19px] w-[19px] items-center justify-center ${
                                timelineActive.includes(index) ? "bg-[#8a6f4c]" : ""
                            }`}
                        >
                            <Icon className="size-3.5" />
                        </span>
                        <span className="h-1 w-px bg-[#707987]"></span>
                        {index === 45 && (
                            <svg viewBox="0 0 12 4" className="absolute -top-1 h-1 w-3" stroke="#4db4e8"><path d="M1 4 L3 0 M5 4 L7 0 M9 4 L11 0" /></svg>
                        )}
                    </li>
                );
            })}
            <li className="absolute -top-1 -right-1">
                <svg viewBox="0 0 8 27" className="h-[27px] w-2" fill="#c9ced4"><path d="M0 0 H8 V5 L5 8 V27 H3.500 V8 L0 5Z" /></svg>
            </li>
        </ol>
        <button aria-label="Timeline settings" className="mr-2.5 ml-4">
            <svg viewBox="0 0 14 14" className="size-3.5" fill="none" stroke="#a5adb8">
                <circle cx="7" cy="7" r="3.500" strokeWidth="2.600" />
                <circle cx="7" cy="7" r="5.800" strokeWidth="2" strokeDasharray="2.500 2.050" />
            </svg>
        </button>
    </div>
);

const taskbarApps = [
    {
        name: "Task view",
        art: <g fill="none" stroke="#e6e9ed" strokeWidth="1.500"><path d="M3 0 V3 H13 V0 M3 6 H13 V13 H3Z M3 20 V16 H13 V20" /><path d="M18 0 V5 M18 11 V20" /><path d="M16.500 6 H19.500 V9 H16.500Z" fill="#e6e9ed" stroke="none" /></g>,
        small: true,
    },
    {
        name: "Copilot",
        art: (
            <g>
                <path d="M7 2 H13 C15 2 15 4 16 6 H12 L9 15 C8 18 6 18 4 17 C0 17 0 14 1 11 L3 5 C4 3 5 2 7 2Z" fill="#2f7df0" />
                <path d="M2 8 L7 9 L5 17 H4 C0 17 0 14 1 11Z" fill="#35c2a0" />
                <path d="M1 12 L6 13 L5 17 H4 C1 17 0 15 1 12Z" fill="#e6c93a" />
                <path d="M13 18 H7 C5 18 5 16 4 14 H8 L11 5 C12 2 14 2 16 3 C20 3 20 6 19 9 L17 15 C16 17 15 18 13 18Z" fill="#c34fe0" />
                <path d="M9 18 L11 11 L19 10 L17 15 C16 17 15 18 13 18Z" fill="#fa6f8b" />
                <path d="M8 14 L10 8 L12 9 L10 15 L7 18 C6 18 5 16 8 14Z" fill="#ff9a56" />
            </g>
        ),
    },
    {
        name: "File Explorer",
        art: <g><path d="M1 2 H8 L10 4 H19 V18 H1Z" fill="#f2b632" /><path d="M1 6 H19 V17 H1Z" fill="#ffd867" /><path d="M4 19 V11 H16 V19 H13 V15 H7 V19Z" fill="#4a9be0" /></g>,
        open: true,
    },
    {
        name: "Firefox",
        art: (
            <g>
                <circle cx="10" cy="11" r="9" fill="#ff5a3c" />
                <path d="M12 0 C14 3 19 5 19 11 C19 17 15 20 10 20 C15 18 17 13 14 9 C13 7 11 4 12 0Z" fill="#ffc83a" />
                <path d="M2 5 C3 4 4 4 4 3 L6 6 C9 5 9 6 10 7 L7 9 C7 12 13 12 13 10 C14 14 11 17 8 16 C4 15 2 11 2 5Z" fill="#ffa02e" />
                <circle cx="10.500" cy="11.500" r="4" fill="#7a46d8" />
                <path d="M4 7 L10 7 L7 10 C8 12 11 12 12 11 C11 15 6 14 5 11Z" fill="#ff8b28" />
            </g>
        ),
        open: true,
    },
    {
        name: "Edge",
        art: (
            <g>
                <circle cx="10" cy="10" r="9.500" fill="#1479d1" />
                <path d="M1 8 C3 2 9 0 13 1 C18 3 20 7 19 11 C18 14 14 14 12 13 C14 11 13 8 10 7 C6 6 2 7 1 8Z" fill="#43d3a2" />
                <path d="M1 8 C4 5 8 5 11 7 C7 7 6 11 8 14 C10 17 14 18 17 16 C13 21 6 20 3 16 C1 13 0 11 1 8Z" fill="#1a5fb4" />
                <path d="M12 13 C13 12 13 10 12 9 C10 9 9 12 10 14 C12 16 16 16 18 14 C16 14 13 14 12 13Z" fill="#1f2d42" />
            </g>
        ),
    },
    {
        name: "Firefox Private",
        art: <g><circle cx="10" cy="10" r="9.500" fill="#8000d7" /><path d="M9.500 9 C7 5 3 6 3.500 10 C4 13 8 13 9.500 9 C11 5 16 5 16 9 C16 13 12 13 9.500 9Z" fill="none" stroke="#fff" strokeWidth="2" /><circle cx="15.500" cy="15.500" r="4" fill="#ff6a3c" /><circle cx="15.500" cy="15.500" r="1.800" fill="#9059ff" /></g>,
    },
    {
        name: "WhatsApp",
        art: <g><path d="M2 18 L3.500 14 A8 8 0 1 1 7 17Z" fill="none" stroke="#3ee071" strokeWidth="2" /><path d="M7 6 L9 6 L9.500 8.500 L9 9.500 C9.500 11 10.500 12 12 12.500 L13 11.500 L15 12.500 C15 15 12 15.500 9.500 13 C7 11 6 8 7 6Z" fill="#3ee071" /></g>,
        badge: "3",
    },
];

const Taskbar = () => (
    <footer className="flex h-[33px] shrink-0 bg-[#1f2c40] font-['Open_Sans','Noto_Sans',sans-serif] text-white">
        <button aria-label="Start" className="flex w-[39px] shrink-0 items-center justify-center bg-[#1b2a4a]">
            <svg viewBox="0 0 14 14" className="size-3.5" fill="#fff"><path d="M0 2 L6 1.200 V6.600 H0Z M7 1 L14 0 V6.600 H7Z M0 7.500 H6 V12.900 L0 12Z M7 7.500 H14 V14 L7 13Z" /></svg>
        </button>
        <label className="flex w-[280px] shrink-0 items-center gap-[9px] border border-[#5d5f63] bg-[#323232] px-[9px]">
            <svg viewBox="0 0 14 14" className="size-3.5 shrink-0" fill="none" stroke="#e2e2e2" strokeWidth="1.300"><circle cx="9" cy="5" r="4" /><path d="M6 8 L1 13.500" /></svg>
            <input
                type="text"
                aria-label="Search"
                placeholder="Type here to search"
                className="w-full bg-transparent text-[11px] text-[#dcdcdc] placeholder-[#dcdcdc] outline-none"
            />
        </label>
        <div className="flex flex-1">
            {taskbarApps.map((app) => (
                <button
                    key={app.name}
                    aria-label={app.name}
                    className="relative flex w-10 shrink-0 items-center justify-center"
                >
                    <svg viewBox="0 0 20 20" className={app.small ? "size-3.5" : "size-5"} aria-hidden="true">{app.art}</svg>
                    {app.badge && (
                        <span className="absolute right-0.5 bottom-1 flex size-3 items-center justify-center rounded-full bg-[#2b2f36] text-[9px] leading-none font-bold ring-1 ring-[#8b929d]">
                            {app.badge}
                        </span>
                    )}
                    {app.open && <span className="absolute inset-x-1 bottom-0 h-0.5 bg-[#76b9ed]"></span>}
                </button>
            ))}
            <button aria-label="Autodesk Fusion" className="relative flex w-10 shrink-0 items-center justify-center bg-[#4a5566]">
                <FusionLogo className="size-5" />
                <span className="absolute inset-x-0 bottom-0 h-0.5 bg-[#76b9ed]"></span>
            </button>
        </div>
        <div className="flex shrink-0 items-center gap-[7px] text-[9px]">
            <svg viewBox="0 0 10 6" className="mr-0.5 h-1.5 w-2.5" fill="none" stroke="#fff"><path d="M0.500 5.500 L5 1 L9.500 5.500" /></svg>
            <svg viewBox="0 0 14 13" className="h-[13px] w-3.5" fill="none" stroke="#e6e9ed"><path d="M1 2.500 L13 0.500 V11 L1 12Z M4 5 A3 3 0 0 1 9 5 M9 7 A3 3 0 0 1 4 8" /><circle cx="11" cy="10" r="3" fill="#f5a623" stroke="none" /></svg>
            <svg viewBox="0 0 12 12" className="size-3" fill="none" stroke="#e6e9ed"><path d="M0.500 4 H2.500 L5.500 1.500 V10.500 L2.500 8 H0.500Z M7 4.500 Q8 6 7 7.500 M8.500 3 Q10.500 6 8.500 9 M10 1.500 Q13 6 10 10.500" /></svg>
            <svg viewBox="0 0 14 10" className="h-2.5 w-3.5" fill="none" stroke="#e6e9ed"><path d="M4 2.500 H12.500 V8.500 H4Z M13.500 4 V7 M2 0 V3 M0.500 2.500 V4.500 H3.500 V2.500 M2 5 V8 H4" /><path d="M6 4 H11 V7 H6Z" fill="#e6e9ed" /></svg>
            <svg viewBox="0 0 12 12" className="size-3" fill="none" stroke="#c7ccd3"><path d="M1 11 A10 10 0 0 1 11 1 M4 11 A7 7 0 0 1 11 4 M7 11 A4 4 0 0 1 11 7" /><circle cx="10" cy="10" r="1" fill="#fff" /></svg>
            <span className="text-[10px]">ENG</span>
            <div className="w-[50px] text-center leading-[14px] whitespace-nowrap">
                <div>3:08 PM</div>
                <div>12/20/2025</div>
            </div>
            <button aria-label="Notifications" className="relative mx-1 w-5">
                <svg viewBox="0 0 14 13" className="h-[13px] w-3.5" fill="#fff"><path d="M0 0 H14 V10 H7 L4 13 V10 H0Z" /><path d="M3 3 H11 M3 5.500 H11 M3 8 H8" stroke="#1f2c40" /></svg>
                <span className="absolute top-1.5 right-0 flex size-3 items-center justify-center rounded-full bg-[#2b2f36] text-[9px] leading-none font-bold ring-1 ring-[#8b929d]">
                    2
                </span>
            </button>
            <span className="mr-[3px] h-[33px] w-px bg-[#4a5566]"></span>
        </div>
    </footer>
);

const App: React.FC = () => {
    return (
        <div className="flex h-screen flex-col overflow-hidden">
            <TitleBar />
            <DocumentBar />
            <Ribbon />
            <main className="relative flex-1 overflow-hidden bg-white">
                <Scene />
                <ViewCube />
                <BrowserPanel />
                <NavBar />
                <button aria-label="Assistant" className="absolute right-[11px] bottom-[7px] flex size-3 items-center justify-center rounded-full rounded-br-none bg-black">
                    <svg viewBox="0 0 8 8" className="size-2" fill="none" stroke="#fff"><path d="M1 6 L4 3 L5 5 L7 2" /></svg>
                </button>
            </main>
            <Timeline />
            <Taskbar />
        </div>
    );
};

export default App;
